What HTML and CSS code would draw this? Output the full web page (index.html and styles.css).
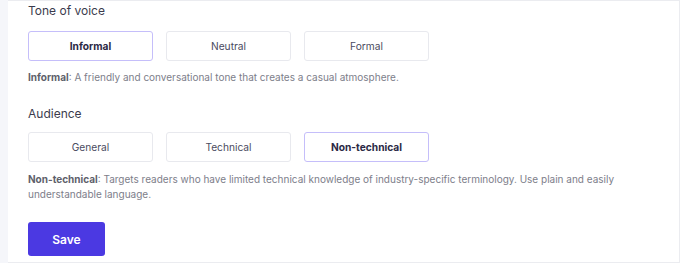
FILE: index.html
```html
<!DOCTYPE html>
<html>
<head>
<meta charset="utf-8">
<link rel="stylesheet" href="styles.css">
</head>
<body>
<div class="card">
  <section class="group">
    <div class="label">Tone of voice</div>
    <div class="options">
      <button class="opt selected">Informal</button>
      <button class="opt">Neutral</button>
      <button class="opt">Formal</button>
    </div>
    <p class="desc"><b>Informal</b>: A friendly and conversational tone that creates a casual atmosphere.</p>
  </section>
  <section class="group second">
    <div class="label">Audience</div>
    <div class="options">
      <button class="opt">General</button>
      <button class="opt">Technical</button>
      <button class="opt selected">Non-technical</button>
    </div>
    <p class="desc"><b>Non-technical</b>: Targets readers who have limited technical knowledge of industry-specific terminology. Use plain and easily understandable language.</p>
  </section>
  <div class="actions">
    <button class="save">Save</button>
  </div>
</div>
</body>
</html>
```

FILE: styles.css
```css
html, body {
  margin: 0;
  padding: 0;
  height: 263px;
  overflow: hidden;
}
body {
  background: #f5f6fa;
  font-family: Inter, "Noto Sans", sans-serif;
  padding-left: 8px;
}
.card {
  box-sizing: border-box;
  width: 672px;
  height: 263px;
  background: #ffffff;
  border: 1px solid #ebecf0;
  border-left: none;
  padding: 0 20px 0 20px;
  display: flex;
  flex-direction: column;
}
.group {
  display: flex;
  flex-direction: column;
}
.label {
  font-size: 12px;
  line-height: 20px;
  color: #3b3b4d;
  margin-bottom: 10px;
}
.second {
  margin-top: 19px;
}
.second .label {
  margin-bottom: 8px;
}
.options {
  display: flex;
  gap: 13px;
}
.opt {
  box-sizing: border-box;
  width: 125px;
  height: 30px;
  background: #ffffff;
  border: 1px solid #e8e9ee;
  border-radius: 3px;
  font-family: inherit;
  font-size: 10.2px;
  color: #4a4a60;
  padding: 0;
}
.opt.selected {
  border-color: #c5befa;
  font-weight: 700;
  color: #2b2945;
}
.desc {
  margin: 9px 0 0 0;
  font-size: 10px;
  line-height: 15px;
  color: #7d7e8a;
  max-width: 630px;
}
.desc b {
  font-weight: 700;
  color: #5e5f6b;
}
.second .desc {
  margin-top: 10px;
}
.actions {
  margin-top: 20px;
}
.save {
  width: 77px;
  height: 34px;
  background: #4b39e2;
  color: #ffffff;
  border: none;
  border-radius: 3px;
  font-family: inherit;
  font-size: 12px;
  font-weight: 600;
  padding: 0;
}
```
